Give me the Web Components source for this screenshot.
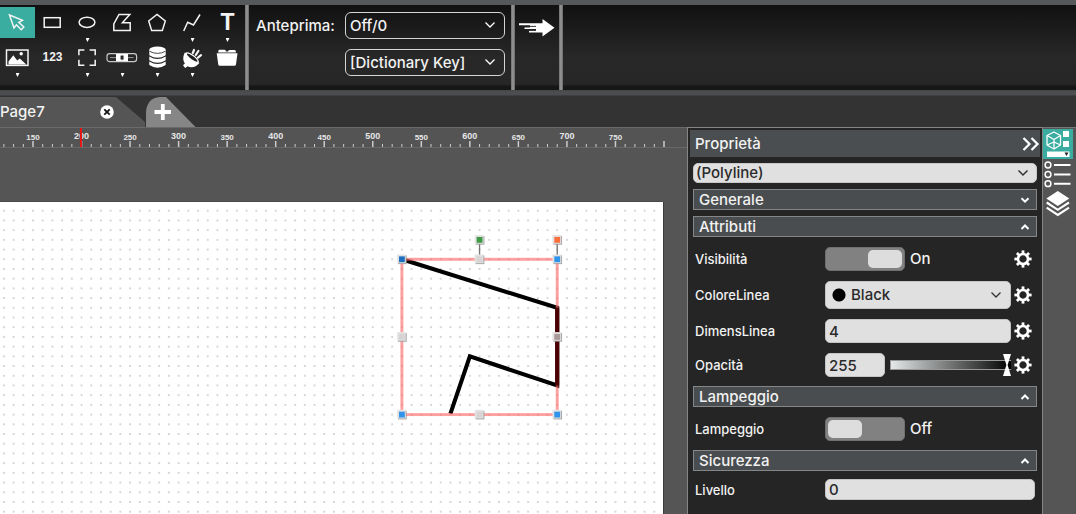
<!DOCTYPE html>
<html lang="it">
<head>
<meta charset="utf-8">
<title>Editor</title>
<style>
html, body { margin: 0; height: 100%; }
body { background: #555; color: #f2f2f2; font: 500 14px/20px Inter, "Noto Sans", sans-serif; overflow: hidden; }
</style>
</head>
<body>
<editor-app></editor-app>
<script>
const define = (name, html, setup) => customElements.define(name, class extends HTMLElement {
  connectedCallback() {
    if (this.shadowRoot) return;
    const root = this.attachShadow({ mode: 'open' });
    root.innerHTML = (typeof html === 'function' ? html(this) : html);
    if (setup) setup(root, this);
  }
});

const reset = `
*, *::before, *::after { box-sizing: border-box; }
button, select, input { font: inherit; color: inherit; margin: 0; }
button { border: 0; background: none; padding: 0; cursor: pointer; }
select { appearance: none; cursor: pointer; text-overflow: ellipsis; }
svg { display: block; }`;

const gear = `<svg width="18" height="18" viewBox="-9 -9 18 18" aria-hidden="true">
<circle r="5" fill="none" stroke="#fff" stroke-width="2.6"/>
<g stroke="#fff" stroke-width="2.8">${[0, 45, 90, 135, 180, 225, 270, 315].map(a => `<path d="M0-5.4V-8.6" transform="rotate(${a})"/>`).join('')}</g></svg>`;

const icons = {
  pointer: '<path d="M9.5 8 22.5 13.4 18.8 15.4 23.8 20 21.2 22.7 16.4 17.8 14 21Z"/>',
  rect: '<rect x="9.2" y="10.7" width="16" height="9.6"/>',
  ellipse: '<ellipse cx="17" cy="15.3" rx="7.9" ry="5.1"/>',
  polygon: '<path d="M14 7.5H24.8L17.4 15.8H25.2V23.6H8.8V17Z"/>',
  pentagon: '<path d="M17 7.4 25.3 13.9 22.3 23.6H11.7L8.7 13.9Z"/>',
  polyline: '<path d="M8.7 24 12.7 15.2 18.5 18 25 7.5"/>',
  image: '<rect x="6.5" y="8" width="21.5" height="15.4"/><path fill="#fff" stroke="none" d="M8.5 22.4V19.6L13.3 13.2 17.2 18.6 19.8 16.6 26.3 22.4Z"/><circle cx="21.2" cy="11.8" r="1.7" fill="#fff" stroke="none"/>',
  frame: '<path d="M8.9 13.2V7.9H14.4M19.6 7.9H25.2V13.2M25.2 17.8V23.2H19.6M14.4 23.2H8.9V17.8"/>',
  slider: '<rect x="2" y="11.6" width="29.6" height="8" rx="2.6" stroke="#c8c8c8" stroke-width="1.2"/><path d="M5 15.6H28.600" stroke="#999" stroke-width="1"/><rect x="11" y="12" width="12" height="7.200" fill="#fff" stroke="none"/><rect x="15.6" y="13.4" width="3" height="4.4" rx="1" fill="#222" stroke="#999" stroke-width=".8"/>',
  database: '<g fill="#fff" stroke="none"><ellipse cx="17.500" cy="7.600" rx="8.200" ry="3"/><path d="M9.300 8V13.200Q17.500 18.400 25.700 13.200V8Z"/><path d="M9.300 14.500Q17.500 19.500 25.700 14.500V18.200Q17.500 23.200 9.300 18.200Z"/><path d="M9.300 19.500Q17.500 24.500 25.700 19.500V23Q17.500 28.400 9.300 23Z"/></g><path d="M9.600 9.300Q17.500 13.500 25.400 9.300" stroke="#333" stroke-width=".9"/>',
  plug: '<path fill="#fff" stroke="none" d="M9.800 10.400C7.600 15 8 19 10 21.200L8 23.300 10.200 25.900 12.600 24.200C16 26.200 21.200 25.200 24.400 21Z"/><ellipse cx="17" cy="15.800" rx="8.200" ry="3.100" transform="rotate(36 17 15.800)" fill="#fff" stroke="none"/><ellipse cx="17.200" cy="15.600" rx="6.500" ry="1.600" transform="rotate(36 17.200 15.600)" fill="#222" stroke="none"/><path stroke-width="2.200" stroke-linecap="round" d="M17.800 11 19 8M20.800 12.800 23.400 9M23 15.700 26 13.200"/>',
  folder: '<g fill="#fff" stroke="none"><path d="M8.300 10.600V9.200Q8.300 7.800 9.700 7.800H14.600Q15.800 7.800 16 9.400L18 9.600Q18.200 8 19.700 8H24.600Q25.900 8 25.900 9.500V10.600Z"/><path d="M6.700 11.200H27.500L26 22.200Q25.800 23.700 24.500 23.700H9.800Q8.400 23.700 8.200 22.200Z"/></g>'
};

/* A toolbar cell: a glyph or a short text, with an optional menu caret below it. */
define('tool-button', el => `<style>${reset}
:host { display: block; width: 35px; height: 35px; }
button { display: grid; grid-template-rows: 31px 4px; width: 100%; height: 100%; justify-items: center; }
.face { display: grid; place-items: center; width: 35px; height: 31px; }
:host([active]) .face { background: #3aada0; }
.big { font: 700 23px/31px "Liberation Sans", sans-serif; }
.small { font: 700 12px/31px "Liberation Sans", sans-serif; }
.caret { width: 4px; height: 4px; background: #fff; clip-path: polygon(0 0, 100% 0, 50% 100%); }
</style>
<button type="button" aria-label="${el.getAttribute('label')}">
<span class="face">${el.hasAttribute('icon')
    ? `<svg width="35" height="31" viewBox="0 0 35 31" fill="none" stroke="#f4f4f4" stroke-width="1.500">${icons[el.getAttribute('icon')]}</svg>`
    : `<span class="${el.getAttribute('size')}"><slot></slot></span>`}</span>
${el.hasAttribute('menu') ? '<span class="caret"></span>' : ''}</button>`);

define('tool-bar', `<style>${reset}
:host { display: flex; height: 85px; background: linear-gradient(#111, #282828 62%, #262626 93%, #161616 96%); }
.tools { display: grid; grid-template-columns: repeat(7, 35px); grid-auto-rows: 35px; padding-top: 2px; }
.rule { width: 4px; background: linear-gradient(90deg, #707070, #999 50%, #666); }
.preview { display: grid; grid-template-columns: 89px 160px; grid-auto-rows: 27px; row-gap: 10px; padding: 7px 6px 0 7px; align-items: center; font-size: 15px; }
select { grid-column: 2; width: 160px; height: 27px; border: 1px solid #d5d5d5; border-radius: 6px; padding: 0 28px 0 4px; color: #f2f2f2;
 background: url("data:image/svg+xml,%3Csvg xmlns='http://www.w3.org/2000/svg' width='12' height='8'%3E%3Cpath d='M1.500 1.500 6 6 10.500 1.500' fill='none' stroke='white' stroke-width='1.300'/%3E%3C/svg%3E") no-repeat right 8px top 8px; }
option { color: #222; }
.run { width: 44px; display: flex; justify-content: center; align-items: flex-start; padding-top: 12px; }
</style>
<div class="tools">
<tool-button label="Selezione" icon="pointer" active></tool-button>
<tool-button label="Rettangolo" icon="rect"></tool-button>
<tool-button label="Ellisse" icon="ellipse" menu></tool-button>
<tool-button label="Poligono" icon="polygon"></tool-button>
<tool-button label="Pentagono" icon="pentagon"></tool-button>
<tool-button label="Polilinea" icon="polyline" menu></tool-button>
<tool-button label="Testo" size="big" menu>T</tool-button>
<tool-button label="Immagine" icon="image" menu></tool-button>
<tool-button label="Numero" size="small">123</tool-button>
<tool-button label="Cornice" icon="frame" menu></tool-button>
<tool-button label="Cursore" icon="slider" menu></tool-button>
<tool-button label="Dati" icon="database" menu></tool-button>
<tool-button label="Connessione" icon="plug" menu></tool-button>
<tool-button label="Libreria" icon="folder"></tool-button>
</div>
<span class="rule"></span>
<div class="preview">
<label for="state">Anteprima:</label>
<select id="state"><option>Off/0</option></select>
<select aria-label="Dizionario"><option>[Dictionary Key]</option></select>
</div>
<span class="rule"></span>
<button class="run" type="button" aria-label="Avanti"><svg width="38" height="21" viewBox="0 0 38 21"><path fill="#fff" d="M1 6.200H24.500V2L36.500 10.700 24.500 19.500V15.600H11V13.800H18V12H6.500V10.500H12V8.200H1Z"/><path stroke="#222" stroke-width=".9" d="M8 9.400H18M8 13H18"/></svg></button>
<span class="rule"></span>`);

define('page-tabs', `<style>${reset}
:host { display: flex; height: 31px; padding-top: 1px; background: #333; font-size: 15px; }
.tab { display: flex; align-items: center; justify-content: space-between; width: 145px; height: 30px; padding-right: 31px; background: #555; clip-path: polygon(0 0, 116px 0, 100% 25px, 100% 100%, 0 100%); }
.tab button { height: 30px; }
.add { margin-left: 1px; height: 30px; }
</style>
<div class="tab"><button type="button">Page7</button>
<button type="button" aria-label="Chiudi"><svg width="14" height="14" viewBox="0 0 14 14"><circle cx="7" cy="7" r="6.800" fill="#fff"/><path d="M4.300 4.300 9.700 9.700M9.700 4.300 4.300 9.700" stroke="#111" stroke-width="1.800"/></svg></button></div>
<button class="add" type="button" aria-label="Nuova pagina"><svg width="50" height="30" viewBox="0 0 50 30"><path d="M0 30V15Q1 1 14 0H20L49.500 30Z" fill="#868686"/><path d="M16.800 7V23M8.500 15H25" stroke="#fff" stroke-width="3.800"/></svg></button>`);

define('page-ruler', `<style>${reset}
:host { display: block; height: 21px; overflow: hidden; border-top: 1px solid #6a6a6a; border-bottom: 1px solid #686868; background: #545454; }
text { font-family: "Liberation Sans", sans-serif; font-weight: 700; fill: #e6e6e6; text-anchor: middle; }
</style><svg width="684" height="20" aria-hidden="true"></svg>`, root => {
  const at = v => (v - 116) * 664 / 684;
  let s = '';
  for (let v = 120; v <= 800; v += 10) {
    const half = v % 50 === 0;
    s += `<path d="M${at(v)} ${half ? 13 : 16}V19" stroke="#ccc" stroke-width="${half ? 1.500 : 1}"/>`;
    if (half && v < 800) s += `<text x="${at(v)}" y="${v % 100 ? 12 : 11}" font-size="${v % 100 ? 8 : 9}">${v}</text>`;
  }
  s += `<path d="M${at(200) - .6} 0V20" stroke="#e81414" stroke-width="2"/>`;
  root.querySelector('svg').innerHTML = s;
});

/* Drawing surface; the user units of the SVG are the units of the ruler. */
define('page-canvas', `<style>${reset}
:host { display: block; flex: 1; margin: 54px 24px 0 0; background: #fff; overflow: hidden; box-shadow: 1px 0 #3c3c3c, 0 -1px #4a4a4a; }
</style><svg width="664" height="664" viewBox="116 1 684 684" role="img" aria-label="Polyline">
<defs><pattern id="dots" x="-5" y="-5" width="10" height="10" patternUnits="userSpaceOnUse"><rect x="4.400" y="4.400" width="1.200" height="1.200" fill="#8c8c8c"/></pattern></defs>
<path fill="url(#dots)" d="M116 4H798V685H116Z"/>
<path d="M530 60 690 110V190L600 160 580 219" fill="none" stroke="#000" stroke-width="4.200"/>
<rect x="530" y="60" width="160" height="160" fill="none" stroke="#f66" stroke-opacity=".62" stroke-width="3"/>
<path d="M690 110V190" stroke="#4c0003" stroke-width="4.200"/>
<path d="M610 42V58M690 42V58" stroke="#777" stroke-width="1.400"/>
<g id="handles"></g></svg>`, root => {
  const handle = ([x, y, c]) => `<path fill="#999" fill-opacity=".85" d="M${x - 4} ${y - 4}H${x + 5}V${y + 5}H${x - 4}Z"/><path fill="#e4e4e4" fill-opacity=".95" d="M${x - 5} ${y - 5}H${x + 4}V${y + 4}H${x - 5}Z"/><path fill="${c}" d="M${x - 3} ${y - 3}H${x + 3}V${y + 3}H${x - 3}Z"/>`;
  root.querySelector('#handles').innerHTML = [
    [530, 60, '#1f6fc0'], [690, 60, '#3094ea'], [530, 220, '#3094ea'], [690, 220, '#3094ea'],
    [610, 60, '#d8d4d4'], [530, 140, '#d8d4d4'], [610, 220, '#d8d4d4'], [690, 140, '#a99'],
    [610, 40, '#3f9a45'], [690, 40, '#f9703c']].map(handle).join('');
});

const rowCss = `${reset}
:host { display: grid; grid-template-columns: 127px minmax(0, 1fr) 18px; align-items: center; padding: 0 8px 0 5px; column-gap: 3px; }
:host([wide]) { grid-template-columns: 127px minmax(0, 1fr); padding-right: 5px; }
label { font-size: 13px; }
.box { display: flex; align-items: center; }
.field { height: 24px; border: 1px solid #c4c4c4; border-radius: 5px; background: #e0e0e0; color: #2a2a2a; padding: 0 3px; font-size: 15px; width: 100%; min-width: 0; }
.gear { height: 18px; }`;
const gearButton = el => el.hasAttribute('gear') ? `<button class="gear" type="button" aria-label="Opzioni">${gear}</button>` : '';

define('prop-text', el => `<style>${rowCss}
:host([wide]) .field { height: 21px; }
</style><label for="f">${el.getAttribute('label')}</label><div class="box"><input class="field" id="f" type="text" value="${el.getAttribute('value')}"></div>${gearButton(el)}`);

define('prop-toggle', el => `<style>${rowCss}
.box { gap: 5px; font-size: 15px; }
input { appearance: none; width: 80px; height: 24px; border-radius: 5px; background: #818181; border: 1px solid #6f6f6f; padding: 2px; display: flex; cursor: pointer; }
input::before { content: ""; width: 34px; height: 18px; border-radius: 5px; background: #ddd; }
input:checked { justify-content: flex-end; }
</style><label for="f">${el.getAttribute('label')}</label><div class="box"><input id="f" type="checkbox" role="switch" ${el.hasAttribute('on') ? 'checked' : ''}><span>${el.hasAttribute('on') ? 'On' : 'Off'}</span></div>${gearButton(el)}`);

define('prop-color', el => `<style>${rowCss}
.field { height: 28px; padding: 0 28px 0 25px;
 background: radial-gradient(circle at 13px 50%, #000 6px, transparent 7px), url("data:image/svg+xml,%3Csvg xmlns='http://www.w3.org/2000/svg' width='12' height='8'%3E%3Cpath d='M1.500 1.500 6 6 10.500 1.500' fill='none' stroke='%23333' stroke-width='1.300'/%3E%3C/svg%3E") no-repeat right 8px center, #e0e0e0; }
</style><label for="f">${el.getAttribute('label')}</label><div class="box"><select class="field" id="f"><option>${el.getAttribute('value')}</option></select></div>${gearButton(el)}`);

define('prop-opacity', el => `<style>${rowCss}
.field { flex: none; width: 60px; }
.box { gap: 5px; }
.range { appearance: none; flex: 1; min-width: 0; height: 24px; background: none; }
.range::-webkit-slider-runnable-track { height: 10px; border: 1px solid #999; border-right: 0; background: linear-gradient(90deg, #e4e8e8, #000); }
.range::-webkit-slider-thumb { appearance: none; width: 8px; height: 22px; margin-top: -7px; background: #fff; clip-path: polygon(0 0, 100% 0, 58% 50%, 100% 100%, 0 100%, 42% 50%); }
</style><label for="f">${el.getAttribute('label')}</label><div class="box"><input class="field" id="f" type="text" value="${el.getAttribute('value')}"><input class="range" type="range" min="0" max="255" value="${el.getAttribute('value')}" aria-label="${el.getAttribute('label')}"></div>${gearButton(el)}`);

define('prop-group', el => `<style>${reset}
:host { display: block; padding: 0 3px; }
.head { display: flex; align-items: center; justify-content: space-between; width: 100%; height: 21px; padding: 0 6px 0 5px; border: 1px solid #848687; background: #494d4f; font-size: 15px; }
.body { display: flex; flex-direction: column; gap: 10px; margin: 0 -3px; padding: 10px 0 9px; }
:host([tight]) .body { padding-top: 8px; }
</style><button class="head" type="button" aria-expanded="${el.hasAttribute('open')}">${el.getAttribute('label')}
<svg width="10" height="8" viewBox="0 0 10 8"><path d="${el.hasAttribute('open') ? 'M1.500 6 5 2.500 8.500 6' : 'M1.500 2.200 5 5.700 8.500 2.200'}" fill="none" stroke="#fff" stroke-width="2"/></svg></button>
${el.hasAttribute('open') ? '<div class="body"><slot></slot></div>' : ''}`);

define('property-panel', `<style>${reset}
:host { display: flex; flex-direction: column; flex: none; width: 356px; padding: 2px; border: 1px solid #858585; border-bottom: 0; background: #252525; }
header { display: flex; align-items: center; justify-content: space-between; height: 27px; padding-left: 5px; background: #4a4e50; font-size: 15px; }
select { margin: 6px 3px; height: 20px; border: 1px solid #c8c8c8; border-radius: 5px; padding: 0 28px 0 2px; color: #2a2a2a; font-size: 15px; line-height: 18px;
 background: #e0e0e0 url("data:image/svg+xml,%3Csvg xmlns='http://www.w3.org/2000/svg' width='12' height='8'%3E%3Cpath d='M1.500 1.500 6 6 10.500 1.500' fill='none' stroke='%23333' stroke-width='1.500'/%3E%3C/svg%3E") no-repeat right 7px center; }
prop-group:not([open]) { margin-bottom: 6px; }
</style>
<header>Proprietà<button type="button" aria-label="Comprimi"><svg width="19" height="18" viewBox="0 0 19 18"><path d="M2.500 3 8.500 9 2.500 15M10.500 3 16.500 9 10.500 15" fill="none" stroke="#fff" stroke-width="2.200"/></svg></button></header>
<select aria-label="Oggetto"><option>(Polyline)</option></select>
<prop-group label="Generale"></prop-group>
<prop-group label="Attributi" open>
<prop-toggle label="Visibilità" on gear></prop-toggle>
<prop-color label="ColoreLinea" value="Black" gear></prop-color>
<prop-text label="DimensLinea" value="4" gear></prop-text>
<prop-opacity label="Opacità" value="255" gear></prop-opacity>
</prop-group>
<prop-group label="Lampeggio" open><prop-toggle label="Lampeggio"></prop-toggle></prop-group>
<prop-group label="Sicurezza" open tight><prop-text label="Livello" value="0" wide></prop-text></prop-group>`);

define('side-dock', `<style>${reset}
:host { display: flex; flex-direction: column; flex: none; width: 33px; padding-top: 1px; background: #555; border-top: 1px solid #777; }
button { width: 30px; height: 30px; }
.on { background: #3aada0; }
</style>
<button class="on" type="button" aria-label="Proprietà"><svg width="30" height="30" viewBox="0 0 30 30"><g fill="none" stroke="#fff" stroke-width="1.300" stroke-linejoin="round"><path d="M11 3 17.500 6.500V16L11 20 4 16V6.500Z"/><path d="M4 6.500 11 10.500 17.500 6.500M11 10.500V20M4 16 11 13 17.500 16"/></g><path fill="#fff" d="M20 2H26V8H20ZM20 12H26V18H20ZM4 22.500H26.500V28H4Z"/><path d="M21.500 23.500H25.500L23.500 27Z" fill="#222"/></svg></button>
<button type="button" aria-label="Elenco"><svg width="30" height="30" viewBox="0 0 30 30"><g fill="none" stroke="#fff" stroke-width="1.500"><circle cx="5" cy="6" r="2.900"/><circle cx="5" cy="15.500" r="2.900"/><circle cx="5" cy="24.700" r="2.900"/><path stroke-width="1.900" d="M11 6H27.500M11 15.500H27.500M11 24.700H27.500"/></g></svg></button>
<button type="button" aria-label="Livelli"><svg width="30" height="30" viewBox="0 0 30 30"><path fill="#fff" d="M14.800 2 26.300 9.500 14.800 17 3.300 9.500Z"/><path fill="none" stroke="#fff" stroke-width="2.200" d="M3.700 13.500 14.800 20.800 26 13.500M3.700 18.700 14.800 26 26 18.700"/></svg></button>`);

define('editor-app', `<style>${reset}
:host { display: flex; flex-direction: column; height: 100vh; }
.edge { height: 5px; background: #56595b; }
.band { height: 6px; background: linear-gradient(#444, #4b4d50 30%, #4b4d50 80%, #333); }
main { display: flex; flex: 1; min-height: 0; }
.work { display: flex; flex-direction: column; flex: 1; min-width: 0; background: #555; }
</style>
<div class="edge"></div><tool-bar></tool-bar><div class="band"></div><page-tabs></page-tabs>
<main><section class="work"><page-ruler></page-ruler><page-canvas></page-canvas></section>
<property-panel></property-panel><side-dock></side-dock></main>`);
</script>
</body>
</html>
